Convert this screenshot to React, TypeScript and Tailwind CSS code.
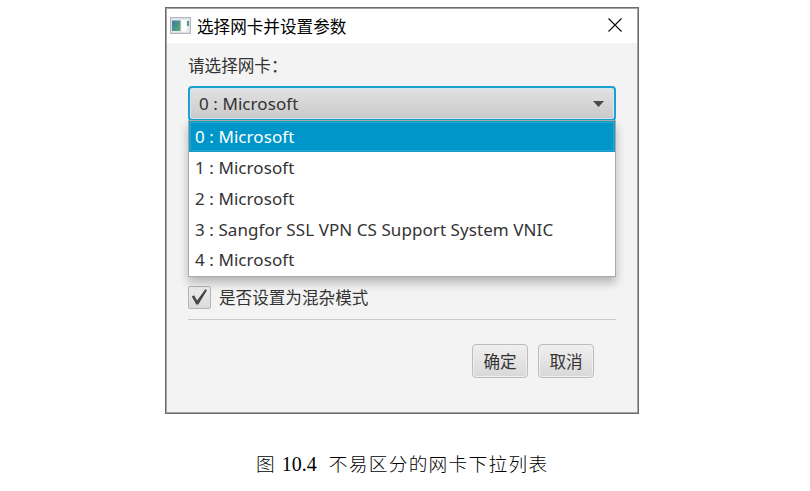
const adapters = [
  "0 : Microsoft",
  "1 : Microsoft",
  "2 : Microsoft",
  "3 : Sangfor SSL VPN CS Support System VNIC",
  "4 : Microsoft",
];

function AppIcon() {
  return (
    <svg className="mt-[-2px] block h-[17px] w-[21px]" viewBox="0 0 21 17">
      <defs>
        <linearGradient id="pane" x1="0" y1="0" x2="1" y2="1">
          <stop offset="0" stopColor="#3b7aa6" />
          <stop offset="1" stopColor="#5fae70" />
        </linearGradient>
      </defs>
      <rect x="0.6" y="0.6" width="19.8" height="15.8" fill="#e6eaee" stroke="#b4b8bd" strokeWidth="1.2" />
      <rect x="2" y="3.5" width="8.5" height="10.5" fill="url(#pane)" />
      <rect x="11.5" y="3" width="5" height="11.5" fill="#fff" />
      <rect x="17" y="4" width="2" height="5" fill="#519c88" />
    </svg>
  );
}

function Button({ label }: { label: string }) {
  return (
    <button className="flex h-[34px] w-14 items-center justify-center rounded-[4px] border border-[#bcbcbc] bg-linear-to-b from-[#f0f0f0] to-[#d8d8d8] pt-[2px] text-[16.6px] leading-none shadow-[inset_0_0_0_1px_#f0f0f0]">
      {label}
    </button>
  );
}

export default function App() {
  return (
    <main className="h-[491px] w-[810px] overflow-hidden bg-white pt-[7px] font-['Noto_Sans','Noto_Sans_CJK_SC',sans-serif] text-[#333]">
      <section className="ml-[165px] flex h-[407px] w-[474px] flex-col border border-[#6c6c6c] bg-[#f3f3f3] p-px shadow-[inset_0_0_0_1px_#a4a4a4]">
        <header className="flex h-[34px] shrink-0 items-center bg-white pr-[15px] pl-[3px] text-black">
          <AppIcon />
          <h1 className="ml-[6px] grow font-['Noto_Sans_CJK_SC',sans-serif] text-[16.6px] leading-6">选择网卡并设置参数</h1>
          <svg className="mt-[-2px] size-[14px]" viewBox="0 0 14 14" fill="none" stroke="#111" strokeWidth="1.2">
            <path d="M.5.5 13.5 13.5M13.5.5.5 13.5" />
          </svg>
        </header>
        <div className="flex flex-col px-[21px]">
          <label className="mt-[10px] h-6 font-['Noto_Sans_CJK_SC',sans-serif] text-[16.6px] leading-6">请选择网卡：</label>
          <div className="relative mt-[9px]">
            <div className="flex h-[35px] items-center justify-between rounded-[4px] border-2 border-[#1ba1cf] bg-linear-to-b from-[#e2e2e2] to-[#c9c9c9] pr-[10px] pl-[9px] text-[17px] tracking-[0.07px] shadow-[inset_0_0_0_1px_#d5e8ef]">
              <span className="pt-px">0 : Microsoft</span>
              <svg className="h-[6px] w-[11px]" viewBox="0 0 11 6" fill="#4a4a4a">
                <path d="M0 0H11L5.5 6Z" />
              </svg>
            </div>
            <ul className="absolute top-[34px] left-0 h-[157px] w-[428px] border border-[#a9a9a9] bg-white shadow-[0_6px_9px_rgba(0,0,0,0.25)]">
              {adapters.map((name, i) => (
                <li
                  key={name}
                  className={
                    i === 0
                      ? "flex h-[31px] items-center bg-[#0096c9] pt-px pl-[6px] text-[17px] tracking-[0.07px] text-white shadow-[inset_0_0_0_1px_#1b9ac6,inset_0_0_0_2px_#25a6d2]"
                      : "flex h-[30.75px] items-center pt-px pl-[6px] text-[17px] tracking-[0.07px]"
                  }
                >
                  {name}
                </li>
              ))}
            </ul>
          </div>
          <div className="mt-[164px] flex h-6 items-center gap-2">
            <span className="flex size-[23px] items-center justify-center rounded-[2px] border border-[#b5b5b5] bg-linear-to-b from-[#eeeeee] to-[#dadada]">
              <svg className="size-[17px]" viewBox="0 0 17 17" fill="#464646">
                <path d="M.8 7.4 3 6.2 6.1 11.5 14.3.3 16 1.2 7.3 15.5H5.3Z" />
              </svg>
            </span>
            <span className="font-['Noto_Sans_CJK_SC',sans-serif] text-[16.6px] leading-6">是否设置为混杂模式</span>
          </div>
          <hr className="mt-[10px] border-[#c9c9c9]" />
          <footer className="mt-6 flex justify-end gap-[10px] pr-[22px]">
            <Button label="确定" />
            <Button label="取消" />
          </footer>
        </div>
      </section>
      <p className="mt-[35px] ml-[256px] flex h-7 items-center font-['Noto_Sans_CJK_SC',sans-serif] text-[18.7px] leading-7 font-light text-black">
        <span>图</span>
        <span className="ml-[7px] w-[36px] pt-px font-['Liberation_Serif',serif] text-[20px] font-normal">10.4</span>
        <span className="ml-[11px] tracking-[1.3px]">不易区分的网卡下拉列表</span>
      </p>
    </main>
  );
}
